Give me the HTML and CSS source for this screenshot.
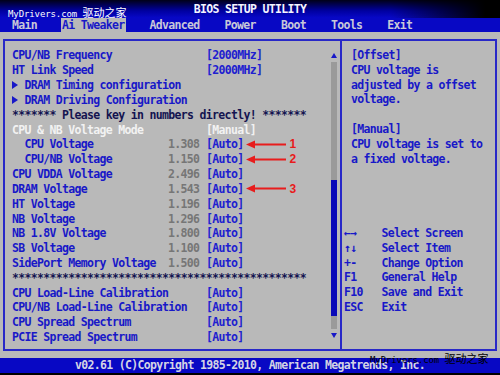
FILE: index.html
```html
<!DOCTYPE html>
<html lang="en">
<head>
    <meta charset="UTF-8">
    <title>BIOS Setup Utility - Ai Tweaker</title>
    <link rel="stylesheet" href="styles.css">
</head>
<body>

<div class="screen">
    <div class="titlebar">BIOS SETUP UTILITY</div>
    <div class="watermark wm-top">MyDrivers.com <span class="cjk">驱动之家</span></div>

    <div class="tabs">
        <span class="tab">Main</span>
        <span class="tab active">Ai Tweaker</span>
        <span class="tab">Advanced</span>
        <span class="tab">Power</span>
        <span class="tab">Boot</span>
        <span class="tab">Tools</span>
        <span class="tab">Exit</span>
    </div>

    <div class="main">
        <div class="frame">
            <div class="left">
                <div class="items">
                    <div class="row"><span class="label">CPU/NB Frequency</span><span class="num"></span><span class="opt">[2000MHz]</span></div>
                    <div class="row"><span class="label">HT Link Speed</span><span class="num"></span><span class="opt">[2000MHz]</span></div>
                    <div class="row"><span class="label wide"><span class="tri"><svg width="6" height="8" viewBox="0 0 6 8"><path d="M0 0 L6 4 L0 8 Z"/></svg></span>DRAM Timing configuration</span></div>
                    <div class="row"><span class="label wide"><span class="tri"><svg width="6" height="8" viewBox="0 0 6 8"><path d="M0 0 L6 4 L0 8 Z"/></svg></span>DRAM Driving Configuration</span></div>
                    <div class="row dark"><span class="wide">******* Please key in numbers directly! *******</span></div>
                    <div class="row light"><span class="label">CPU &amp; NB Voltage Mode</span><span class="num"></span><span class="opt">[Manual]</span></div>
                    <div class="row"><span class="label sub">CPU Voltage</span><span class="num">1.308</span><span class="opt">[Auto]<svg class="arrow" width="40" height="9" viewBox="0 0 40 9"><path d="M0 4.5 L9 0.5 L9 8.5 Z"/><rect x="7" y="3.5" width="33" height="2"/></svg><b class="mark">1</b></span></div>
                    <div class="row"><span class="label sub">CPU/NB Voltage</span><span class="num">1.150</span><span class="opt">[Auto]<svg class="arrow" width="40" height="9" viewBox="0 0 40 9"><path d="M0 4.5 L9 0.5 L9 8.5 Z"/><rect x="7" y="3.5" width="33" height="2"/></svg><b class="mark">2</b></span></div>
                    <div class="row"><span class="label">CPU VDDA Voltage</span><span class="num">2.496</span><span class="opt">[Auto]</span></div>
                    <div class="row"><span class="label">DRAM Voltage</span><span class="num">1.543</span><span class="opt">[Auto]<svg class="arrow" width="40" height="9" viewBox="0 0 40 9"><path d="M0 4.5 L9 0.5 L9 8.5 Z"/><rect x="7" y="3.5" width="33" height="2"/></svg><b class="mark">3</b></span></div>
                    <div class="row"><span class="label">HT Voltage</span><span class="num">1.196</span><span class="opt">[Auto]</span></div>
                    <div class="row"><span class="label">NB Voltage</span><span class="num">1.296</span><span class="opt">[Auto]</span></div>
                    <div class="row"><span class="label">NB 1.8V Voltage</span><span class="num">1.800</span><span class="opt">[Auto]</span></div>
                    <div class="row"><span class="label">SB Voltage</span><span class="num">1.100</span><span class="opt">[Auto]</span></div>
                    <div class="row"><span class="label">SidePort Memory Voltage</span><span class="num">1.500</span><span class="opt">[Auto]</span></div>
                    <div class="row dark"><span class="wide">***********************************************</span></div>
                    <div class="row"><span class="label long">CPU Load-Line Calibration</span><span class="opt">[Auto]</span></div>
                    <div class="row"><span class="label long">CPU/NB Load-Line Calibration</span><span class="opt">[Auto]</span></div>
                    <div class="row"><span class="label long">CPU Spread Spectrum</span><span class="opt">[Auto]</span></div>
                    <div class="row"><span class="label long">PCIE Spread Spectrum</span><span class="opt">[Auto]</span></div>
                </div>

                <div class="scrollbar">
                    <svg class="sb-arrow" width="6" height="5" viewBox="0 0 6 5"><path d="M3 0 L6 5 L0 5 Z"/></svg>
                    <div class="track"><div class="thumb"></div></div>
                    <svg class="sb-arrow" width="6" height="5" viewBox="0 0 6 5"><path d="M0 0 L6 0 L3 5 Z"/></svg>
                </div>
            </div>

            <div class="right">
                <div class="help">
                    <div class="line">[Offset]</div>
                    <div class="line">CPU voltage is</div>
                    <div class="line">adjusted by a offset</div>
                    <div class="line">voltage.</div>
                    <div class="line"></div>
                    <div class="line">[Manual]</div>
                    <div class="line">CPU voltage is set to</div>
                    <div class="line">a fixed voltage.</div>
                </div>
                <div class="keys">
                    <div class="line"><span class="key">←→</span>Select Screen</div>
                    <div class="line"><span class="key">↑↓</span>Select Item</div>
                    <div class="line"><span class="key">+-</span>Change Option</div>
                    <div class="line"><span class="key">F1</span>General Help</div>
                    <div class="line"><span class="key">F10</span>Save and Exit</div>
                    <div class="line"><span class="key">ESC</span>Exit</div>
                </div>
            </div>
        </div>
    </div>

    <div class="footer">v02.61 (C)Copyright 1985-2010, American Megatrends, Inc.</div>
    <div class="watermark wm-bottom">MyDrivers.com <span class="cjk">驱动之家</span></div>
</div>

</body>
</html>
```

FILE: styles.css
```css
body {
    margin: 0;
    padding: 0;
    background-color: #000;
}

.screen {
    position: relative;
    width: 500px;
    height: 375px;
    overflow: hidden;
    font-family: "DejaVu Sans Mono", "Liberation Mono", monospace;
    font-weight: bold;
    font-size: 11.5px;
    letter-spacing: -0.67px;
    background-color: #000;
}

.titlebar {
    height: 18px;
    line-height: 19px;
    text-align: center;
    color: #f4f4ff;
    background:
        linear-gradient(to right, rgba(0, 0, 0, 0) 78%, #000 97%),
        linear-gradient(#000018, #0000a0 60%, #0808c8);
}

.tabs {
    display: flex;
    gap: 23px;
    height: 14px;
    line-height: 14px;
    padding-left: 11px;
    background-color: #0808c4;
}

.tab {
    padding: 0 1px;
    color: #c8c8d8;
}

.tab.active {
    background-color: #b9b9b9;
    color: #1818c8;
}

.main {
    height: 326px;
    padding: 7px 3px 0 3px;
    box-sizing: border-box;
    background-color: #b9b9b9;
}

.frame {
    display: flex;
    height: 312px;
    border: 2px solid #2828c8;
    box-sizing: border-box;
}

.left {
    display: flex;
    width: 332px;
    padding-right: 3px;
}

.items {
    flex: 1;
    padding: 7px 0 0 7px;
}

.row {
    display: grid;
    grid-template-columns: 156px 38px auto;
    align-items: center;
    height: 14.84px;
    white-space: pre;
    color: #1818c8;
}

.label {
    display: flex;
    align-items: center;
}

.label.sub {
    padding-left: 12.5px;
}

.label.long {
    grid-column: 1 / 3;
}

.tri {
    display: inline-flex;
    flex-shrink: 0;
    width: 12.5px;
}

.tri svg {
    fill: #1818c8;
}

.num {
    color: #767676;
}

.opt {
    display: flex;
    align-items: center;
    color: #2020d0;
}

.row.light,
.row.light .opt {
    color: #f2f2f2;
}

.row.dark {
    color: #141450;
}

.wide {
    grid-column: 1 / 4;
}

.arrow {
    margin-left: 2px;
    fill: #e81c1c;
}

.mark {
    margin-left: 4px;
    font-family: "Liberation Sans", Arial, sans-serif;
    font-size: 12px;
    letter-spacing: 0;
    color: #e81c1c;
}

.scrollbar {
    display: flex;
    flex-direction: column;
    align-items: center;
    width: 6px;
    padding-top: 12px;
    gap: 4px;
}

.sb-arrow {
    fill: #1818c8;
}

.track {
    width: 6px;
    height: 267px;
    background-color: #9a9a9a;
}

.thumb {
    margin-top: 118px;
    height: 136px;
    background-color: #0808b8;
}

.right {
    flex: 1;
    border-left: 2px solid #2828c8;
    padding: 7px 0 0 2px;
    color: #1818c8;
}

.line {
    height: 14.84px;
    line-height: 14.84px;
    white-space: pre;
}

.help {
    padding-left: 7px;
    height: 178px;
}

.key {
    display: inline-block;
    width: 37.5px;
}

.footer {
    height: 15px;
    line-height: 15px;
    text-align: center;
    color: #d4d4e4;
    background-color: #0808c4;
}

.watermark {
    position: absolute;
    font-family: "DejaVu Sans Mono", monospace;
    font-weight: normal;
    font-size: 9px;
    letter-spacing: -0.1px;
    white-space: pre;
}

.watermark .cjk {
    font-family: "Noto Sans CJK SC", sans-serif;
    font-size: 11px;
    letter-spacing: 0;
}

.wm-top {
    left: 8px;
    top: 4px;
    color: #fff;
}

.wm-bottom {
    left: 370px;
    top: 350px;
    color: #000;
}
```
